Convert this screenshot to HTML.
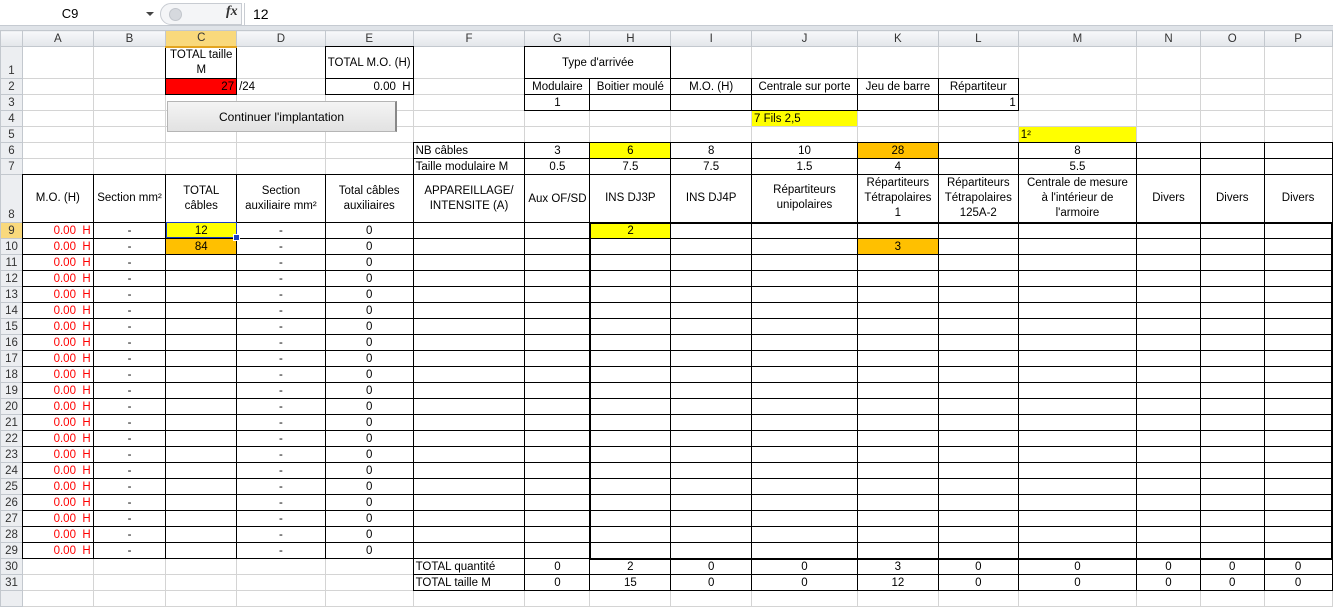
<!DOCTYPE html>
<html><head><meta charset="utf-8">
<style>
html,body{margin:0;padding:0;width:1333px;height:596px;overflow:hidden;background:#fff;font-family:"Liberation Sans",Arial,sans-serif;}
#fb{position:absolute;left:0;top:0;width:1333px;height:30px;background:#fff;}
#fb .band{position:absolute;left:0;top:25px;width:1333px;height:4px;background:#dfe3e8;border-top:1px solid #c5cad1;}
#name{position:absolute;left:0;top:4px;width:140px;height:20px;font-size:13px;line-height:20px;text-align:center;}
#arr{position:absolute;left:146px;top:12px;width:0;height:0;border-left:4px solid transparent;border-right:4px solid transparent;border-top:4px solid #444;}
#pill{position:absolute;left:160px;top:3px;width:80px;height:20px;border:1px solid #c8ccd2;border-radius:11px 0 0 11px;background:#f4f5f7;}
#pill i{position:absolute;left:8px;top:4px;width:11px;height:11px;border-radius:50%;background:#d6d9de;border:1px solid #c2c6cc;}
#fx{position:absolute;left:226px;top:4px;font-family:"Liberation Serif",serif;font-style:italic;font-weight:bold;font-size:14px;color:#333;}
#fval{position:absolute;left:253px;top:4px;font-size:14px;line-height:20px;}
#sep{position:absolute;left:244px;top:3px;width:1px;height:22px;background:#c8ccd2;}
table{position:absolute;left:0;top:30px;border-collapse:collapse;table-layout:fixed;font-size:11.5px;}
tr{height:16px}
td,th{border:1px solid #d4d4d4;padding:0 2px;line-height:14px;white-space:nowrap;overflow:hidden;font-weight:normal;}
thead th{background:linear-gradient(#f7f8fa,#e3e6ea);color:#333;text-align:center;border-color:#c3c8ce;}
tbody th{background:#eceef1;color:#333;text-align:center;border-color:#c3c8ce;padding:0;}
thead th.sel{background:#f9d97c;border-bottom:2px solid #e3a41f;}
tbody th.sel{background:#f9d97c;}
.b{border:1px double #000;}
.c{text-align:center}.rt{text-align:right}
.r{color:#f00}
.y{background:#ff0}.o{background:#ffc000}.red{background:#f00}
.tl{border-left:2px solid #000}.tr{border-right:2px solid #000}.tt{border-top:2px solid #000}.tb{border-bottom:2px solid #000}
.w{white-space:normal;line-height:15px;text-align:center}
.bt{vertical-align:bottom}
#btn{position:absolute;left:167px;top:101px;width:230px;height:31px;background:linear-gradient(#f4f4f4,#e2e2e2);border:1px solid #b5b5b5;border-right:2px solid #888;font-size:12px;line-height:31px;text-align:center;box-sizing:border-box;}
#cur{position:absolute;left:166px;top:222px;width:71px;height:16px;border:1px solid #1a3fbf;box-sizing:border-box;}
#cur i{position:absolute;right:-4px;bottom:-4px;width:5px;height:5px;background:#1a3fbf;border:1px solid #fff;}
</style></head><body>
<div id="fb"><div id="name">C9</div><div id="arr"></div><div id="pill"><i></i></div><div id="sep"></div><div id="fx">fx</div><div id="fval">12</div><div class="band"></div></div>
<table>
<colgroup><col style="width:22px"><col style="width:71px"><col style="width:73px"><col style="width:71px"><col style="width:89px"><col style="width:86px"><col style="width:112px"><col style="width:65px"><col style="width:81px"><col style="width:81px"><col style="width:106px"><col style="width:81px"><col style="width:80px"><col style="width:119px"><col style="width:64px"><col style="width:64px"><col style="width:68px"></colgroup>
<thead><tr style="height:16px"><th></th><th>A</th><th>B</th><th class="sel">C</th><th>D</th><th>E</th><th>F</th><th>G</th><th>H</th><th>I</th><th>J</th><th>K</th><th>L</th><th>M</th><th>N</th><th>O</th><th>P</th></tr></thead>
<tbody>
<tr style="height:32px"><th class="bt">1</th><td></td><td></td><td class="b w">TOTAL taille M</td><td></td><td class="b c">TOTAL M.O. (H)</td><td></td><td class="b c" colspan="2">Type d'arrivée</td><td></td><td></td><td></td><td></td><td></td><td></td><td></td><td></td></tr>
<tr><th>2</th><td></td><td></td><td class="b rt red">27</td><td>/24</td><td class="b rt">0.00&nbsp; H</td><td></td><td class="b c">Modulaire</td><td class="b c">Boitier moulé</td><td class="b c">M.O. (H)</td><td class="b c">Centrale sur porte</td><td class="b c">Jeu de barre</td><td class="b c">Répartiteur</td><td></td><td></td><td></td><td></td></tr>
<tr><th>3</th><td></td><td></td><td></td><td></td><td></td><td></td><td class="b c">1</td><td class="b"></td><td class="b"></td><td class="b"></td><td class="b"></td><td class="b rt">1</td><td></td><td></td><td></td><td></td></tr>
<tr><th>4</th><td></td><td></td><td></td><td></td><td></td><td></td><td></td><td></td><td></td><td class="y">7 Fils 2,5</td><td></td><td></td><td></td><td></td><td></td><td></td></tr>
<tr><th>5</th><td></td><td></td><td></td><td></td><td></td><td></td><td></td><td></td><td></td><td></td><td></td><td></td><td class="y">1²</td><td></td><td></td><td></td></tr>
<tr><th>6</th><td></td><td></td><td></td><td></td><td></td><td class="b">NB câbles</td><td class="b c">3</td><td class="b c y">6</td><td class="b c">8</td><td class="b c">10</td><td class="b c o">28</td><td class="b"></td><td class="b c">8</td><td class="b"></td><td class="b"></td><td class="b"></td></tr>
<tr><th>7</th><td></td><td></td><td></td><td></td><td></td><td class="b">Taille modulaire M</td><td class="b c">0.5</td><td class="b c">7.5</td><td class="b c">7.5</td><td class="b c">1.5</td><td class="b c">4</td><td class="b"></td><td class="b c">5.5</td><td class="b"></td><td class="b"></td><td class="b"></td></tr>
<tr style="height:48px"><th class="bt">8</th><td class="b w">M.O. (H)</td><td class="b w">Section mm²</td><td class="b w">TOTAL câbles</td><td class="b w">Section auxiliaire mm²</td><td class="b w">Total câbles auxiliaires</td><td class="b w">APPAREILLAGE/ INTENSITE (A)</td><td class="b c">Aux OF/SD</td><td class="b w">INS DJ3P</td><td class="b w">INS DJ4P</td><td class="b w">Répartiteurs unipolaires</td><td class="b w">Répartiteurs Tétrapolaires 1</td><td class="b w">Répartiteurs Tétrapolaires 125A-2</td><td class="b w">Centrale de mesure<br>à l'intérieur de<br>l'armoire</td><td class="b w">Divers</td><td class="b w">Divers</td><td class="b w">Divers</td></tr>
<tr><th class="sel">9</th><td class="b r rt">0.00&nbsp; H</td><td class="b c">-</td><td class="b c y">12</td><td class="b c">-</td><td class="b c">0</td><td class="b"></td><td class="b"></td><td class="b tl tt c y">2</td><td class="b tt"></td><td class="b tt"></td><td class="b tt"></td><td class="b tt"></td><td class="b tt"></td><td class="b tt"></td><td class="b tt"></td><td class="b tt tr"></td></tr>
<tr><th>10</th><td class="b r rt">0.00&nbsp; H</td><td class="b c">-</td><td class="b c o">84</td><td class="b c">-</td><td class="b c">0</td><td class="b"></td><td class="b"></td><td class="b tl"></td><td class="b"></td><td class="b"></td><td class="b c o">3</td><td class="b"></td><td class="b"></td><td class="b"></td><td class="b"></td><td class="b tr"></td></tr>
<tr><th>11</th><td class="b r rt">0.00&nbsp; H</td><td class="b c">-</td><td class="b"></td><td class="b c">-</td><td class="b c">0</td><td class="b"></td><td class="b"></td><td class="b tl"></td><td class="b"></td><td class="b"></td><td class="b"></td><td class="b"></td><td class="b"></td><td class="b"></td><td class="b"></td><td class="b tr"></td></tr>
<tr><th>12</th><td class="b r rt">0.00&nbsp; H</td><td class="b c">-</td><td class="b"></td><td class="b c">-</td><td class="b c">0</td><td class="b"></td><td class="b"></td><td class="b tl"></td><td class="b"></td><td class="b"></td><td class="b"></td><td class="b"></td><td class="b"></td><td class="b"></td><td class="b"></td><td class="b tr"></td></tr>
<tr><th>13</th><td class="b r rt">0.00&nbsp; H</td><td class="b c">-</td><td class="b"></td><td class="b c">-</td><td class="b c">0</td><td class="b"></td><td class="b"></td><td class="b tl"></td><td class="b"></td><td class="b"></td><td class="b"></td><td class="b"></td><td class="b"></td><td class="b"></td><td class="b"></td><td class="b tr"></td></tr>
<tr><th>14</th><td class="b r rt">0.00&nbsp; H</td><td class="b c">-</td><td class="b"></td><td class="b c">-</td><td class="b c">0</td><td class="b"></td><td class="b"></td><td class="b tl"></td><td class="b"></td><td class="b"></td><td class="b"></td><td class="b"></td><td class="b"></td><td class="b"></td><td class="b"></td><td class="b tr"></td></tr>
<tr><th>15</th><td class="b r rt">0.00&nbsp; H</td><td class="b c">-</td><td class="b"></td><td class="b c">-</td><td class="b c">0</td><td class="b"></td><td class="b"></td><td class="b tl"></td><td class="b"></td><td class="b"></td><td class="b"></td><td class="b"></td><td class="b"></td><td class="b"></td><td class="b"></td><td class="b tr"></td></tr>
<tr><th>16</th><td class="b r rt">0.00&nbsp; H</td><td class="b c">-</td><td class="b"></td><td class="b c">-</td><td class="b c">0</td><td class="b"></td><td class="b"></td><td class="b tl"></td><td class="b"></td><td class="b"></td><td class="b"></td><td class="b"></td><td class="b"></td><td class="b"></td><td class="b"></td><td class="b tr"></td></tr>
<tr><th>17</th><td class="b r rt">0.00&nbsp; H</td><td class="b c">-</td><td class="b"></td><td class="b c">-</td><td class="b c">0</td><td class="b"></td><td class="b"></td><td class="b tl"></td><td class="b"></td><td class="b"></td><td class="b"></td><td class="b"></td><td class="b"></td><td class="b"></td><td class="b"></td><td class="b tr"></td></tr>
<tr><th>18</th><td class="b r rt">0.00&nbsp; H</td><td class="b c">-</td><td class="b"></td><td class="b c">-</td><td class="b c">0</td><td class="b"></td><td class="b"></td><td class="b tl"></td><td class="b"></td><td class="b"></td><td class="b"></td><td class="b"></td><td class="b"></td><td class="b"></td><td class="b"></td><td class="b tr"></td></tr>
<tr><th>19</th><td class="b r rt">0.00&nbsp; H</td><td class="b c">-</td><td class="b"></td><td class="b c">-</td><td class="b c">0</td><td class="b"></td><td class="b"></td><td class="b tl"></td><td class="b"></td><td class="b"></td><td class="b"></td><td class="b"></td><td class="b"></td><td class="b"></td><td class="b"></td><td class="b tr"></td></tr>
<tr><th>20</th><td class="b r rt">0.00&nbsp; H</td><td class="b c">-</td><td class="b"></td><td class="b c">-</td><td class="b c">0</td><td class="b"></td><td class="b"></td><td class="b tl"></td><td class="b"></td><td class="b"></td><td class="b"></td><td class="b"></td><td class="b"></td><td class="b"></td><td class="b"></td><td class="b tr"></td></tr>
<tr><th>21</th><td class="b r rt">0.00&nbsp; H</td><td class="b c">-</td><td class="b"></td><td class="b c">-</td><td class="b c">0</td><td class="b"></td><td class="b"></td><td class="b tl"></td><td class="b"></td><td class="b"></td><td class="b"></td><td class="b"></td><td class="b"></td><td class="b"></td><td class="b"></td><td class="b tr"></td></tr>
<tr><th>22</th><td class="b r rt">0.00&nbsp; H</td><td class="b c">-</td><td class="b"></td><td class="b c">-</td><td class="b c">0</td><td class="b"></td><td class="b"></td><td class="b tl"></td><td class="b"></td><td class="b"></td><td class="b"></td><td class="b"></td><td class="b"></td><td class="b"></td><td class="b"></td><td class="b tr"></td></tr>
<tr><th>23</th><td class="b r rt">0.00&nbsp; H</td><td class="b c">-</td><td class="b"></td><td class="b c">-</td><td class="b c">0</td><td class="b"></td><td class="b"></td><td class="b tl"></td><td class="b"></td><td class="b"></td><td class="b"></td><td class="b"></td><td class="b"></td><td class="b"></td><td class="b"></td><td class="b tr"></td></tr>
<tr><th>24</th><td class="b r rt">0.00&nbsp; H</td><td class="b c">-</td><td class="b"></td><td class="b c">-</td><td class="b c">0</td><td class="b"></td><td class="b"></td><td class="b tl"></td><td class="b"></td><td class="b"></td><td class="b"></td><td class="b"></td><td class="b"></td><td class="b"></td><td class="b"></td><td class="b tr"></td></tr>
<tr><th>25</th><td class="b r rt">0.00&nbsp; H</td><td class="b c">-</td><td class="b"></td><td class="b c">-</td><td class="b c">0</td><td class="b"></td><td class="b"></td><td class="b tl"></td><td class="b"></td><td class="b"></td><td class="b"></td><td class="b"></td><td class="b"></td><td class="b"></td><td class="b"></td><td class="b tr"></td></tr>
<tr><th>26</th><td class="b r rt">0.00&nbsp; H</td><td class="b c">-</td><td class="b"></td><td class="b c">-</td><td class="b c">0</td><td class="b"></td><td class="b"></td><td class="b tl"></td><td class="b"></td><td class="b"></td><td class="b"></td><td class="b"></td><td class="b"></td><td class="b"></td><td class="b"></td><td class="b tr"></td></tr>
<tr><th>27</th><td class="b r rt">0.00&nbsp; H</td><td class="b c">-</td><td class="b"></td><td class="b c">-</td><td class="b c">0</td><td class="b"></td><td class="b"></td><td class="b tl"></td><td class="b"></td><td class="b"></td><td class="b"></td><td class="b"></td><td class="b"></td><td class="b"></td><td class="b"></td><td class="b tr"></td></tr>
<tr><th>28</th><td class="b r rt">0.00&nbsp; H</td><td class="b c">-</td><td class="b"></td><td class="b c">-</td><td class="b c">0</td><td class="b"></td><td class="b"></td><td class="b tl"></td><td class="b"></td><td class="b"></td><td class="b"></td><td class="b"></td><td class="b"></td><td class="b"></td><td class="b"></td><td class="b tr"></td></tr>
<tr><th>29</th><td class="b r rt">0.00&nbsp; H</td><td class="b c">-</td><td class="b"></td><td class="b c">-</td><td class="b c">0</td><td class="b"></td><td class="b"></td><td class="b tl tb"></td><td class="b tb"></td><td class="b tb"></td><td class="b tb"></td><td class="b tb"></td><td class="b tb"></td><td class="b tb"></td><td class="b tb"></td><td class="b tr tb"></td></tr>
<tr><th>30</th><td></td><td></td><td></td><td></td><td></td><td class="b">TOTAL quantité</td><td class="b c">0</td><td class="b c">2</td><td class="b c">0</td><td class="b c">0</td><td class="b c">3</td><td class="b c">0</td><td class="b c">0</td><td class="b c">0</td><td class="b c">0</td><td class="b c">0</td></tr>
<tr><th>31</th><td></td><td></td><td></td><td></td><td></td><td class="b">TOTAL taille M</td><td class="b c">0</td><td class="b c">15</td><td class="b c">0</td><td class="b c">0</td><td class="b c">12</td><td class="b c">0</td><td class="b c">0</td><td class="b c">0</td><td class="b c">0</td><td class="b c">0</td></tr>
<tr><th></th><td></td><td></td><td></td><td></td><td></td><td></td><td></td><td></td><td></td><td></td><td></td><td></td><td></td><td></td><td></td><td></td></tr>
</tbody></table>
<div id="btn">Continuer l'implantation</div>
<div id="cur"><i></i></div>
</body></html>
